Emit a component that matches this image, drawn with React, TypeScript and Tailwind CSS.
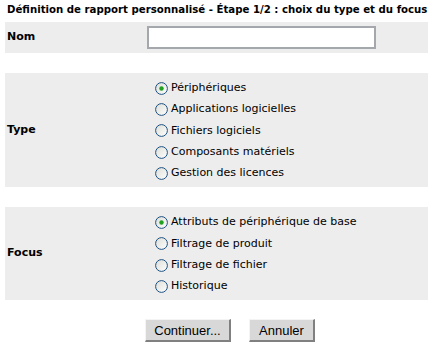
import React from 'react';

interface Choice {
  label: string;
  checked?: boolean;
}

const typeChoices: Choice[] = [
  { label: 'Périphériques', checked: true },
  { label: 'Applications logicielles' },
  { label: 'Fichiers logiciels' },
  { label: 'Composants matériels' },
  { label: 'Gestion des licences' },
];

const focusChoices: Choice[] = [
  { label: 'Attributs de périphérique de base', checked: true },
  { label: 'Filtrage de produit' },
  { label: 'Filtrage de fichier' },
  { label: 'Historique' },
];

function Radio({ checked }: { checked?: boolean }) {
  return (
    <svg width="13" height="13" viewBox="0 0 13 13" className="shrink-0">
      <defs>
        <linearGradient id="rg" x1="0" y1="0" x2="1" y2="1">
          <stop offset="0" stopColor="#dcdcd6" />
          <stop offset="1" stopColor="#ffffff" />
        </linearGradient>
      </defs>
      <circle cx="6.5" cy="6.5" r="5.9" fill="url(#rg)" stroke="#1c5180" strokeWidth="1" />
      {checked && <circle cx="6.5" cy="6.5" r="2.2" fill="#21a121" />}
    </svg>
  );
}

function ChoiceList({ choices }: { choices: Choice[] }) {
  return (
    <div className="flex flex-col pl-[8px] pt-[2px]">
      {choices.map((c) => (
        <div key={c.label} className="flex items-center h-[21.3px] gap-[3px]">
          <Radio checked={c.checked} />
          <span className="text-[11px] text-black">{c.label}</span>
        </div>
      ))}
    </div>
  );
}

export default function App() {
  return (
    <div className="w-[433px] h-[352px] bg-white font-['DejaVu_Sans',Verdana,sans-serif] text-black">
      <div className="h-[22px] pl-[7px] pt-[3px] text-[10.2px] font-bold leading-[14px] whitespace-nowrap">
        Définition de rapport personnalisé - Étape 1/2 : choix du type et du focus
      </div>
      <div className="px-[5px]">
        <div className="h-[31px] bg-[#ededed] flex items-center">
          <div className="w-[142px] pl-[2px] text-[11px] font-bold">Nom</div>
          <input
            type="text"
            className="w-[229px] h-[23px] bg-white border-2 border-[#a4a8ac] outline-none"
          />
        </div>
        <div className="h-[20px]" />
        <div className="h-[114px] bg-[#ededed] flex items-center">
          <div className="w-[142px] pl-[2px] text-[11px] font-bold">Type</div>
          <ChoiceList choices={typeChoices} />
        </div>
        <div className="h-[20px]" />
        <div className="h-[93px] bg-[#ededed] flex items-center">
          <div className="w-[142px] pl-[2px] text-[11px] font-bold">Focus</div>
          <ChoiceList choices={focusChoices} />
        </div>
      </div>
      <div className="flex gap-[18px] pl-[145px] pt-[19px] font-['Liberation_Sans',Arial,sans-serif]">
        <button className="h-[23px] w-[86px] bg-[#d8d8d8] border-t border-l border-[#f4f4f4] border-r-2 border-b-2 border-r-[#808080] border-b-[#808080] text-[13px] leading-none">
          Continuer...
        </button>
        <button className="h-[23px] w-[66px] bg-[#d8d8d8] border-t border-l border-[#f4f4f4] border-r-2 border-b-2 border-r-[#808080] border-b-[#808080] text-[13px] leading-none">
          Annuler
        </button>
      </div>
    </div>
  );
}
